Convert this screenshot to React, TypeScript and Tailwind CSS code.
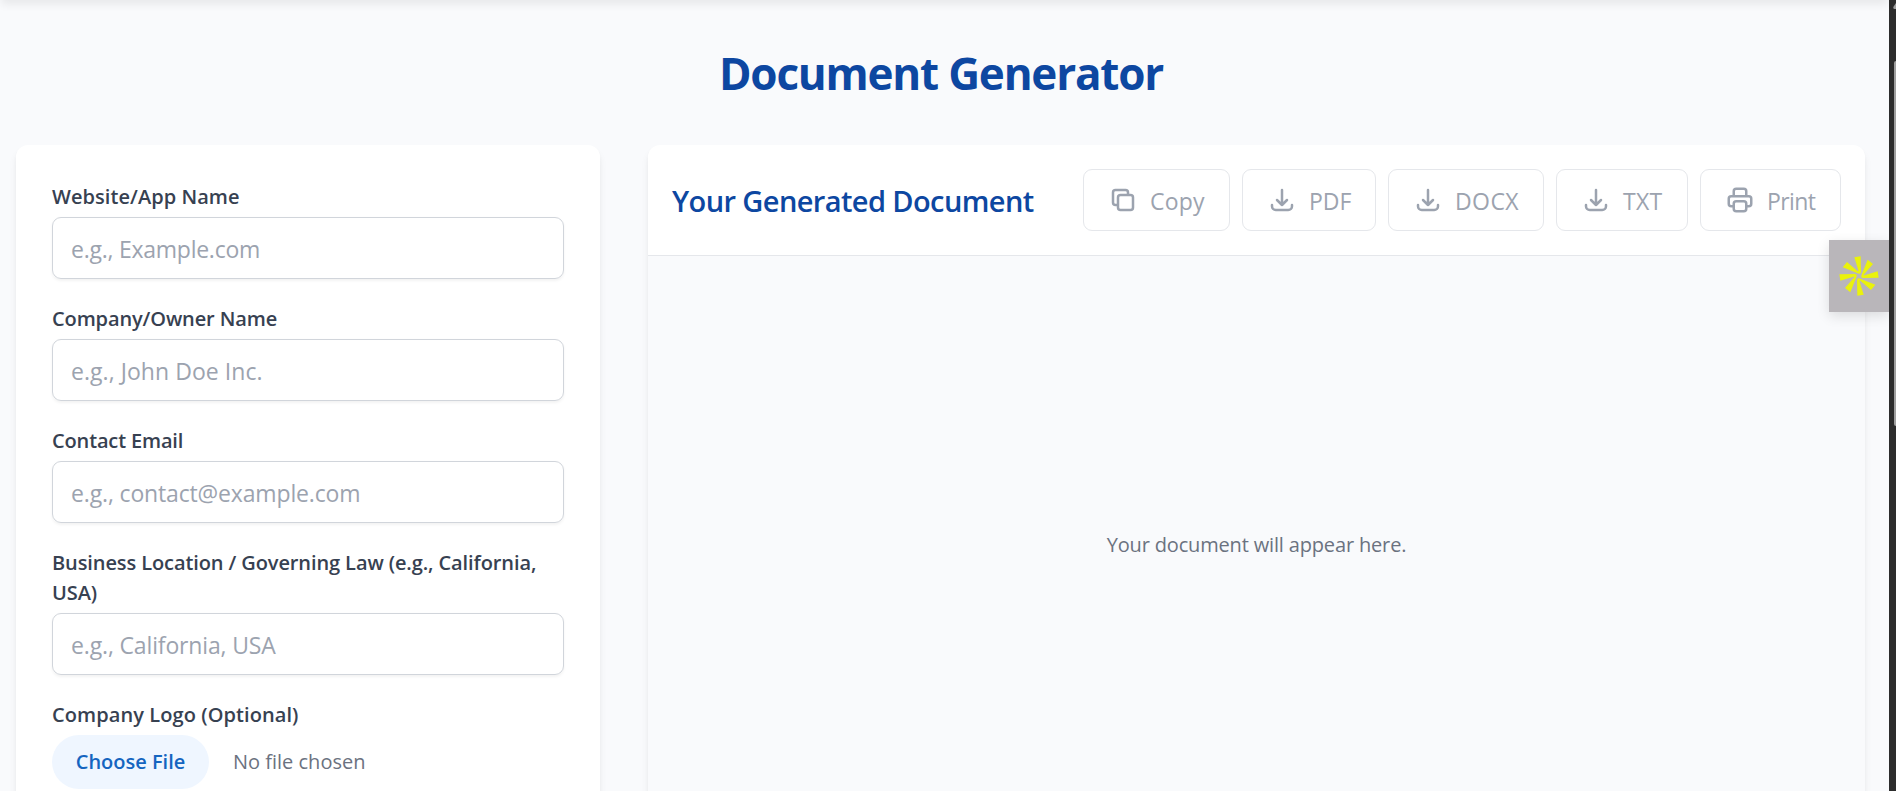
import React from "react";

const fields = [
  { label: "Website/App Name", hint: "e.g., Example.com", labelTracking: "tracking-[0.06px]", hintTracking: "tracking-[-0.25px]" },
  { label: "Company/Owner Name", hint: "e.g., John Doe Inc.", labelTracking: "tracking-[-0.12px]", hintTracking: "tracking-[0.05px]" },
  { label: "Contact Email", hint: "e.g., contact@example.com", labelTracking: "tracking-[-0.15px]", hintTracking: "tracking-[-0.15px]" },
  {
    label: "Business Location / Governing Law (e.g., California, USA)",
    hint: "e.g., California, USA",
    labelTracking: "tracking-[-0.1px]",
    hintTracking: "tracking-[-0.15px]",
  },
];

const COPY =
  "M8 16H6a2 2 0 01-2-2V6a2 2 0 012-2h8a2 2 0 012 2v2m-6 12h8a2 2 0 002-2v-8a2 2 0 00-2-2h-8a2 2 0 00-2 2v8a2 2 0 002 2z";
const DOWNLOAD = "M4 16v1a3 3 0 003 3h10a3 3 0 003-3v-1m-4-4l-4 4m0 0l-4-4m4 4V4";
const PRINT =
  "M17 17h2a2 2 0 002-2v-4a2 2 0 00-2-2H5a2 2 0 00-2 2v4a2 2 0 002 2h2m2 4h6a2 2 0 002-2v-4a2 2 0 00-2-2H9a2 2 0 00-2 2v4a2 2 0 002 2zm8-12V5a2 2 0 00-2-2H9a2 2 0 00-2 2v4h10z";

const actions = [
  { text: "Copy", icon: COPY, width: "w-[147px]", tracking: "tracking-[0.2px]" },
  { text: "PDF", icon: DOWNLOAD, width: "w-[134px]", tracking: "tracking-normal" },
  { text: "DOCX", icon: DOWNLOAD, width: "w-[156px]", tracking: "tracking-[0.4px]" },
  { text: "TXT", icon: DOWNLOAD, width: "w-[132px]", tracking: "tracking-[0.3px]" },
  { text: "Print", icon: PRINT, width: "w-[141px]", tracking: "tracking-[-0.6px]" },
];

const cardShadow = "shadow-[0_6px_9px_-1.5px_rgba(0,0,0,0.08),0_3px_6px_-3px_rgba(0,0,0,0.08)]";
const labelText = "relative top-px text-[20px] leading-[30px] font-semibold text-[#374151]";

function Starburst() {
  return (
    <svg viewBox="0 0 180 180" className="size-[60px]" fill="#eaf20c">
      {[0, 90, 180, 270].map((angle) => (
        <path
          key={angle}
          transform={`rotate(${angle} 90 90)`}
          d="M76 34L95 31L96 77Q95 86 86 82L41 64L54 48L86 76Q89 77 88 73Z"
        />
      ))}
    </svg>
  );
}

export default function App() {
  return (
    <div className="relative flex h-[791px] overflow-hidden bg-[#f9fafc] font-['Open_Sans','Noto_Sans',sans-serif]">
      <div className="absolute -top-6 left-0 h-6 w-[1889px] shadow-[0_6px_9px_-1.5px_rgba(0,0,0,0.07)]" />
      <main className="w-[1889px] shrink-0 px-4">
        <h1 className="pt-[46px] pr-[7px] text-center text-[44px] leading-[54px] font-bold tracking-[-1.2px] text-[#0d47a1]">
          Document Generator
        </h1>
        <div className="mt-[45px] flex items-start gap-12">
          <section className={`flex h-[800px] w-[584px] flex-col gap-6 rounded-xl bg-white p-9 ${cardShadow}`}>
            {fields.map((f) => (
              <label key={f.label} className="flex flex-col gap-1.5">
                <span className={`${labelText} ${f.labelTracking}`}>{f.label}</span>
                <input
                  placeholder={f.hint}
                  className={`h-[62px] rounded-[9px] border border-[#d1d5db] px-[18px] pt-[2px] text-[23px] shadow-[0_1.5px_3px_rgba(0,0,0,0.05)] outline-none placeholder:text-[#9ca3af] ${f.hintTracking}`}
                />
              </label>
            ))}
            <div className="flex flex-col gap-1.5">
              <span className={`${labelText} tracking-[0.08px]`}>Company Logo (Optional)</span>
              <div className="flex items-center gap-6">
                <button className="h-[54px] w-[157px] rounded-full bg-[#eff6ff] text-[20px] font-semibold text-[#1565c0]">
                  Choose File
                </button>
                <span className="text-[20px] text-[#6b7280]">No file chosen</span>
              </div>
            </div>
          </section>
          <section className={`flex h-[800px] w-[1217px] flex-col rounded-xl bg-white ${cardShadow}`}>
            <header className="flex h-[111px] items-center justify-between border-b border-[#e5e7eb] px-6">
              <h2 className="pt-[2px] text-[29px] font-semibold tracking-[-0.6px] text-[#0d47a1]">Your Generated Document</h2>
              <div className="flex gap-3">
                {actions.map((a) => (
                  <button
                    key={a.text}
                    className={`flex h-[62px] items-center gap-3 rounded-[9px] border border-[#e5e7eb] pl-6 text-[23px] text-[#9ca3af] ${a.width} ${a.tracking}`}
                  >
                    <svg
                      viewBox="0 0 24 24"
                      className="size-[30px] shrink-0"
                      fill="none"
                      stroke="currentColor"
                      strokeWidth="2"
                      strokeLinecap="round"
                      strokeLinejoin="round"
                    >
                      <path d={a.icon} />
                    </svg>
                    <span className="pt-[2px]">{a.text}</span>
                  </button>
                ))}
              </div>
            </header>
            <div className="flex-1 bg-[#f9fafc] pt-[274px] text-center text-[20px] leading-[30px] tracking-[-0.16px] text-[#6b7280]">
              Your document will appear here.
            </div>
          </section>
        </div>
      </main>
      <aside className="flex w-[7px] shrink-0 flex-col items-end overflow-hidden bg-[#2c2c2c]">
        <svg viewBox="0 0 3 7" className="mt-[3px] h-[7px] w-[3px]" fill="#9f9f9f">
          <path d="M3 0L0.3 4Q0 6 1.5 6H3Z" />
        </svg>
        <div className="mt-[51px] h-[365px] w-[2px] rounded-l-[2px] bg-[#9f9f9f]" />
      </aside>
      <button className="absolute top-[240px] left-[1829px] flex h-[72px] w-[60px] items-center justify-center bg-[#b9b6ba] shadow-[0_4px_12px_rgba(0,0,0,0.12)] [clip-path:inset(-20px_0_-20px_-20px)]">
        <Starburst />
      </button>
    </div>
  );
}
